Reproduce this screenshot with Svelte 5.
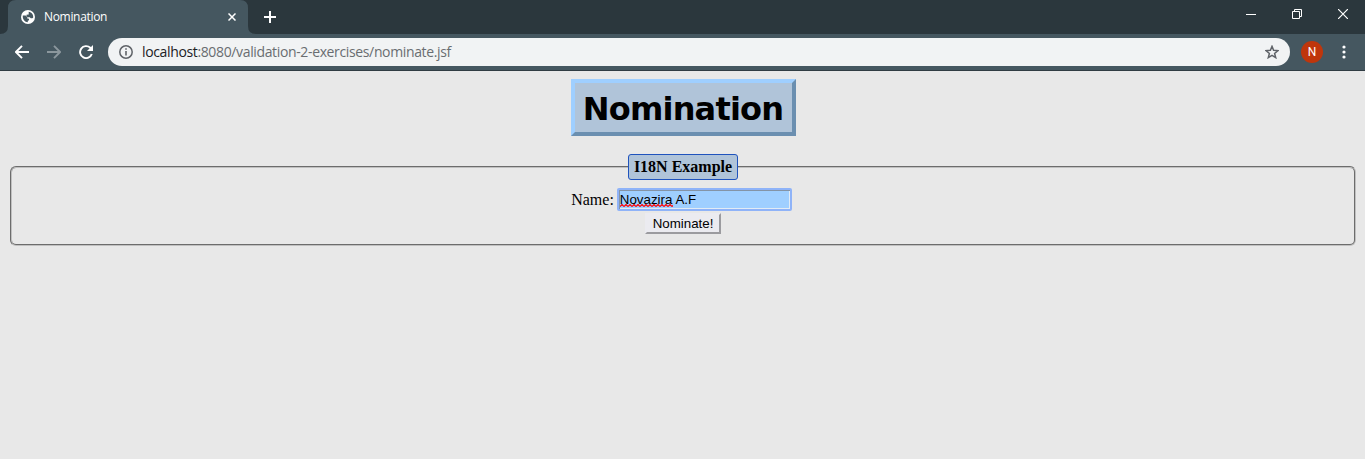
<script>
  let name = $state('Novazira A.F');
</script>

<div class="window">
  <header class="tabs">
    <svg class="tab-shape" width="264" height="34" viewBox="0 0 264 34" aria-hidden="true">
      <path d="M0 34Q8 34 8 26V8Q8 0 16 0H240Q248 0 248 8V26Q248 34 256 34Z" fill="#455760" />
    </svg>
    <div class="tab">
      <svg width="14" height="14" viewBox="0 0 14 14"><circle cx="7" cy="7" r="7" fill="#fff"/><path d="M1.8 5.6H4.6L6.3 7.2V8.5L8 8.7V10.2L6.8 10.8V12.3C3.8 12.2 1.4 9.6 1.8 5.6ZM7.7 1.8C10.7 2.3 12.5 4.7 12.2 7.6L11.4 8.3H9.8L8.7 7.2H6.6L5.5 6.1V4.7L7.7 4.4Z" fill="#455760"/></svg>
      <span class="tab-title">Nomination</span>
      <svg class="tab-close" width="8" height="8" viewBox="0 0 8 8"><path d="m.5.5 7 7m0-7-7 7" stroke="#fff" stroke-width="1.5"/></svg>
    </div>
    <svg class="plus" width="12" height="12" viewBox="0 0 12 12"><path d="M6 0v12M0 6h12" stroke="#fff" stroke-width="2"/></svg>
    <div class="controls">
      <svg width="10" height="10" viewBox="0 0 10 10"><path d="M0 5.5h10" stroke="#fff"/></svg>
      <svg width="10" height="10" viewBox="0 0 10 10"><path d="M.5 2.5h7v7h-7zM2.5 2.5v-2h7v7h-2" fill="none" stroke="#fff"/></svg>
      <svg width="10" height="10" viewBox="0 0 10 10"><path d="m0 0 10 10M10 0 0 10" stroke="#fff" stroke-width="1.2"/></svg>
    </div>
  </header>

  <nav class="toolbar">
    <svg class="nav-icon" width="14" height="14" viewBox="0 0 14 14"><path d="M14 7H1.5M7 .8.9 7 7 13.2" fill="none" stroke="#fff" stroke-width="1.9"/></svg>
    <svg class="nav-icon" width="14" height="14" viewBox="0 0 14 14"><path d="M0 7h12.5M7 .8 13.1 7 7 13.2" fill="none" stroke="#8b979d" stroke-width="1.9"/></svg>
    <svg class="nav-icon" width="14" height="14" viewBox="0 0 14 14"><path d="M12.8 9A6 6 0 1 1 11.3 2.8L12.5 4" fill="none" stroke="#fff" stroke-width="1.9"/><path d="M14 0v6H8Z" fill="#fff"/></svg>
    <div class="address">
      <svg width="14" height="14" viewBox="0 0 14 14"><circle cx="7" cy="7" r="6.2" fill="none" stroke="#5f6368" stroke-width="1.5"/><path d="M7 3.2v1.6M7 6v4.5" stroke="#5f6368" stroke-width="1.6"/></svg>
      <span class="url"><b>localhost</b>:8080/validation-2-exercises/nominate.jsf</span>
      <svg class="star" width="14" height="14" viewBox="0 0 14 14"><path d="m7 1.4 1.6 3.9 4.3.3-3.3 2.8 1.1 4.2L7 10.3l-3.7 2.3 1.1-4.2-3.3-2.8 4.3-.3Z" fill="none" stroke="#5f6368" stroke-width="1.5"/></svg>
    </div>
    <span class="avatar">N</span>
    <svg class="dots" width="4" height="14" viewBox="0 0 4 14"><circle cx="2" cy="2" r="1.6" fill="#fff"/><circle cx="2" cy="7" r="1.6" fill="#fff"/><circle cx="2" cy="12" r="1.6" fill="#fff"/></svg>
  </nav>

  <main>
    <h1>Nomination</h1>
    <fieldset>
      <legend>I18N Example</legend>
      <div class="row">
        <label for="name">Name:</label>
        <div class="field">
          <input id="name" bind:value={name} spellcheck="false" />
          <svg class="squiggle" width="53" height="3" viewBox="0 0 53 3" aria-hidden="true">
            <defs><pattern id="wave" width="4" height="3" patternUnits="userSpaceOnUse"><path d="M0 2.5 2 .5l2 2" fill="none" stroke="#f00" stroke-width="1.2" /></pattern></defs>
            <rect width="53" height="3" fill="url(#wave)" />
          </svg>
        </div>
      </div>
      <button type="button">Nominate!</button>
    </fieldset>
  </main>
</div>

<style>
  :global(body) { margin: 0; background: #e8e8e8; }
  * { box-sizing: border-box; }
  svg { display: block; flex: none; }
  .window { height: 459px; overflow: hidden; background: #e8e8e8; }
  .tabs { position: relative; display: flex; align-items: center; height: 34px; background: #2b373d; }
  .tab-shape { position: absolute; left: 0; top: 0; }
  .tab { position: relative; display: flex; align-items: center; width: 248px; height: 34px; padding: 0 12px 0 21px; }
  .tab-title { margin-left: 9px; font: 12px/16px "Open Sans", sans-serif; letter-spacing: -.32px; color: #fff; }
  .tab-close { margin-left: auto; }
  .plus { margin-left: 16px; position: relative; }
  .controls { display: flex; gap: 36px; margin-left: auto; padding-right: 17px; margin-top: -6px; }
  .toolbar { display: flex; align-items: center; height: 37px; padding-left: 15px; background: #455760; border-bottom: 1px solid #303c43; }
  .nav-icon { margin-right: 18px; }
  .nav-icon:nth-child(3) { margin-right: 15px; }
  .address { display: flex; align-items: center; width: 1182px; height: 28px; padding: 0 11px; border-radius: 14px; background: #f1f3f4; }
  .url { margin-left: 9px; font: 14px/20px "Open Sans", sans-serif; letter-spacing: -.36px; color: #696d71; white-space: nowrap; }
  .url b { font-weight: 400; color: #202124; }
  .star { margin-left: auto; }
  .avatar { width: 22px; height: 22px; margin-left: 11px; border-radius: 50%; background: #bf360c; color: #fff; font: 12px/22px Roboto, sans-serif; text-align: center; }
  .dots { margin-left: 19px; }
  main { display: flex; flex-direction: column; align-items: center; padding: 8px 9px 0 10px; }
  h1 { width: 225px; height: 57px; margin: 0 0 18px; border: 4px solid; border-color: #9fcfff #6b8fb0 #6b8fb0 #9fcfff; background: #b0c4d9; font: bold 32px/52px "DejaVu Sans", sans-serif; letter-spacing: -.8px; text-align: center; white-space: nowrap; color: #000; }
  fieldset { width: 1346px; height: 92px; margin: 0; padding: 7px 0 0; border: 2px groove #c0c0c0; border-radius: 6px; text-align: center; }
  legend { width: 110px; height: 26px; margin: 0 auto; padding: 0; border: 1px solid #1f53bd; border-radius: 3px; background: #b0c4d9; font: bold 16px/24px "Liberation Serif", serif; color: #000; }
  .row { display: flex; align-items: center; justify-content: center; gap: 3px; height: 25px; margin-bottom: 1px; padding-right: 2px; margin-left: -1px; }
  label { font: 16px/20px "Liberation Serif", serif; color: #000; }
  .field { position: relative; width: 175px; height: 23px; }
  input { display: block; width: 175px; height: 23px; margin: 0; padding: 0 1px; border: 2px solid #8fb3f8; border-radius: 2px; outline: 0; background: #9fcfff; box-shadow: inset 1px 1px #8494a6, inset -1px -1px #e1ebf5; font: 13.33px/19px "Liberation Sans", sans-serif; color: #000; }
  .squiggle { position: absolute; left: 3px; top: 16px; }
  button { display: block; width: 76px; height: 21px; margin: 0 auto; padding: 0; border: 2px solid; border-color: #ebebf0 #9b9b9f #9b9b9f #ebebf0; background: #ebebf0; font: 13.33px/17px "Liberation Sans", sans-serif; color: #000; }
</style>
